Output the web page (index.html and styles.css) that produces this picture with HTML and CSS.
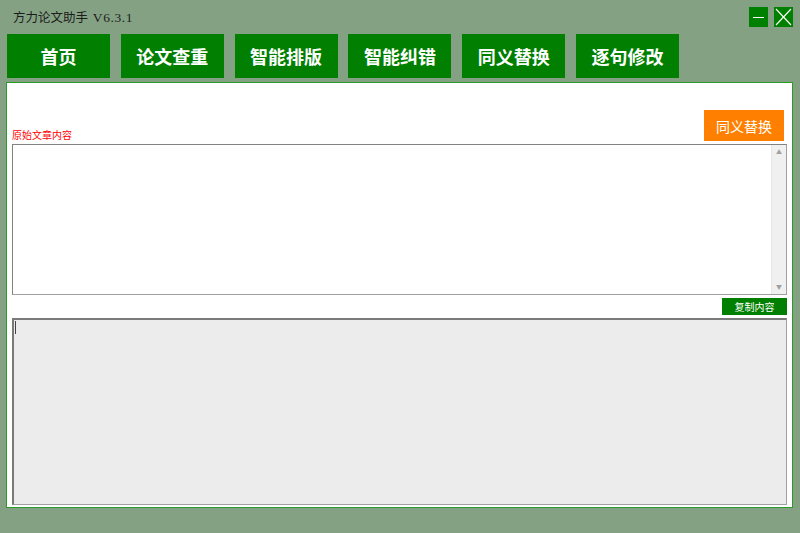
FILE: index.html
```html
<!DOCTYPE html>
<html lang="zh-CN">
<head>
    <meta charset="UTF-8">
    <title>方力论文助手 V6.3.1</title>
    <link rel="stylesheet" href="styles.css">
</head>
<body>
    <div class="titlebar">
        <span class="title">方力论文助手 <span class="ver">V6.3.1</span></span>
        <div class="winbtns">
            <div class="winbtn"><svg width="19" height="20" viewBox="0 0 19 20"><line x1="4" y1="10.5" x2="15" y2="10.5" stroke="#fff" stroke-width="1"/></svg></div>
            <div class="winbtn"><svg width="19" height="20" viewBox="0 0 19 20"><line x1="2" y1="2" x2="17" y2="18" stroke="#fff" stroke-width="1.1"/><line x1="17" y1="2" x2="2" y2="18" stroke="#fff" stroke-width="1.1"/></svg></div>
        </div>
    </div>

    <div class="nav">
        <div class="navbtn">首页</div>
        <div class="navbtn">论文查重</div>
        <div class="navbtn">智能排版</div>
        <div class="navbtn">智能纠错</div>
        <div class="navbtn">同义替换</div>
        <div class="navbtn">逐句修改</div>
    </div>

    <div class="panel">
        <div class="toprow">
            <span class="label">原始文章内容</span>
            <div class="orange-btn">同义替换</div>
        </div>
        <div class="source">
            <div class="scroll">
                <span class="arrow">▲</span>
                <span class="arrow">▼</span>
            </div>
        </div>
        <div class="copyrow">
            <div class="copy-btn">复制内容</div>
        </div>
        <div class="result"><span class="caret"></span></div>
    </div>
</body>
</html>
```

FILE: styles.css
```css
body { margin: 0; width: 800px; height: 533px; background: #84a283; font-family: "Noto Sans CJK SC", "Liberation Sans", sans-serif; overflow: hidden; }
.titlebar { display: flex; justify-content: space-between; align-items: flex-start; height: 34px; padding: 0 7px 0 13px; }
.title { font-size: 12.5px; color: #1c1c1c; margin-top: 9px; line-height: 16px; }
.ver { font-family: "Liberation Serif", serif; font-size: 13.5px; letter-spacing: 0.6px; margin-left: 2px; }
.winbtns { display: flex; gap: 6px; margin-top: 7px; }
.winbtn { width: 19px; height: 20px; background: #008000; }
.winbtn svg { display: block; }
.nav { display: flex; gap: 10.8px; padding-left: 7px; }
.navbtn { width: 103px; height: 44px; background: #007f00; color: #fff; font-weight: bold; font-size: 18px; display: flex; align-items: center; justify-content: center; }
.panel { margin: 4px 7px 0 6px; height: 424px; background: #fff; border: 1px solid #2a9a2a; padding: 0 5px 0 5px; display: flex; flex-direction: column; }
.toprow { display: flex; justify-content: space-between; align-items: flex-end; height: 61px; }
.label { color: #ff0000; font-size: 10px; line-height: 13px; margin-bottom: 3px; }
.orange-btn { width: 80px; height: 31px; background: #ff8000; color: #fff; font-size: 14px; display: flex; align-items: center; justify-content: center; margin-right: 3px; margin-bottom: 3px; }
.source { height: 149px; border: 1px solid #a0a0a0; border-left-color: #828282; border-top-color: #828282; display: flex; justify-content: flex-end; }
.scroll { width: 14px; background: #f0f0f0; border-left: 1px solid #e6e6e6; display: flex; flex-direction: column; justify-content: space-between; align-items: center; }
.arrow { font-size: 6px; color: #a0a0a0; line-height: 14px; }
.copyrow { display: flex; justify-content: flex-end; padding: 3px 0 3px; }
.copy-btn { width: 65px; height: 17px; background: #007f00; color: #fff; font-size: 10px; display: flex; align-items: center; justify-content: center; }
.result { flex: 1; margin-bottom: 2px; background: #ececec; border: 1px solid #a0a0a0; border-top: 2px solid #7a7a7a; border-left: 2px solid #7a7a7a; padding: 1px 1px; }
.caret { display: block; width: 1px; height: 13px; background: #444; }
```
